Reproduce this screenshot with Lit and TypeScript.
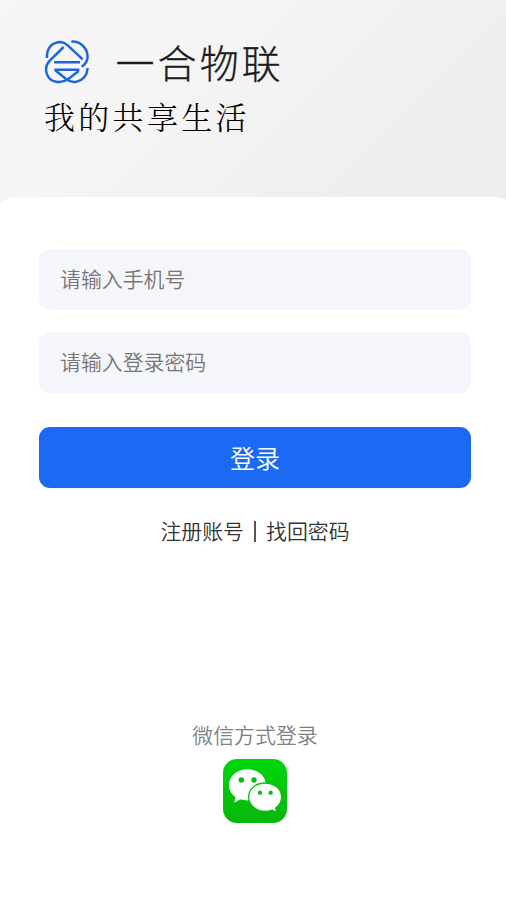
import { LitElement, html, css } from "lit";
import { customElement } from "lit/decorators.js";

@customElement("brand-mark")
class BrandMark extends LitElement {
  static styles = css`
    :host { display: block; width: 46px; height: 46px; }
    svg { display: block; width: 100%; height: 100%; }
  `;
  render() {
    return html`<svg viewBox="0 0 138 138" fill="none" stroke="#1b66dc" stroke-width="7.5">
      <path d="M9 54C7 23 26 6 50 6Q62 7 72 17L116 58" />
      <path d="M59 21L18 61C-4 84 7 120 36 125Q56 129 72 118L104 93" />
      <path d="M82 5C111 3 134 28 130 56Q127 71 113 80" />
      <path d="M30 67H108M31 89H106M34 91L67 118Q80 128 97 125C117 121 129 107 131 84" />
    </svg>`;
  }
}

@customElement("wechat-icon")
class WechatIcon extends LitElement {
  static styles = css`
    :host { display: block; width: 64px; height: 64px; border-radius: 14px; overflow: hidden;
      background: linear-gradient(#00d60c, #08b60c); }
    svg { display: block; width: 100%; height: 100%; }
  `;
  render() {
    return html`<svg viewBox="0 0 192 192">
      <path fill="#fff" d="M73 31C41 31 18 52 18 79C18 94 26 106 38 115L34 131L52 121C60 123 69 125 79 124C112 123 130 103 129 78C128 51 105 31 73 31Z" />
      <path fill="#fff" stroke="#05c30e" stroke-width="4" d="M126 72C98 72 77 90 77 114C77 138 100 157 127 157Q138 157 147 153L161 161L158 147C169 139 176 128 176 114C176 90 154 72 126 72Z" />
      <g fill="#07bd10"><circle cx="55" cy="63" r="8"/><circle cx="93" cy="63" r="8"/><circle cx="111" cy="101" r="6.5"/><circle cx="143" cy="101" r="6.5"/></g>
    </svg>`;
  }
}

@customElement("app-root")
class AppRoot extends LitElement {
  static styles = css`
    :host { display: block; height: 900px; overflow: hidden; box-sizing: border-box;
      font-family: "Noto Sans CJK SC", sans-serif; font-weight: 350;
      background: linear-gradient(135deg, #f6f6f6 0, #f5f5f5 170px, #eeeeee 400px, #eeeeee 100%); }
    * { box-sizing: border-box; }
    header { height: 196.6px; padding: 39px 44px 0; }
    .brand { display: flex; height: 46px; align-items: center; }
    .brand brand-mark { flex: none; margin-top: 2px; }
    h1 { margin: -2px 0 0 25.5px; font-size: 39px; line-height: 46px; letter-spacing: 3.1px; font-weight: 300; color: #1c1c1c; white-space: nowrap; -webkit-text-stroke: 0.3px #1c1c1c; }
    .tagline { margin: 8px 0 0; font-family: "Noto Serif CJK SC", "Noto Sans CJK SC", serif; font-size: 31px; line-height: 46px; letter-spacing: 3.3px; font-weight: 300; color: #000; white-space: nowrap; }
    main { height: 704px; margin: 0 -11px 0 -5px; padding: 52px 46px 0 44px; background: #fff; border-radius: 22px 22px 0 0; display: flex; flex-direction: column; }
    input, button { display: block; width: 100%; height: 61px; border: 0; border-radius: 11px; font-family: inherit; font-weight: inherit; flex: none; outline: 0; }
    input { background: #f5f6fb; padding: 0 21px 3px; font-size: 20.9px; margin-bottom: 22.6px; }
    input::placeholder { color: #757575; opacity: 1; }
    button { margin-top: 11.4px; background: #1c6af3; color: #fff; font-size: 25px; padding: 0 0 2px; }
    .links { display: flex; justify-content: center; align-items: center; margin-top: 27px; height: 30px; font-size: 20.9px; color: #333; }
    .bar { width: 2px; height: 21px; margin: 2px 10px 0 10px; background: #555; }
    .social { margin-top: 174px; display: flex; flex-direction: column; align-items: center; font-size: 20.9px; line-height: 30px; color: #808080; gap: 9.4px; }
  `;
  render() {
    return html`<header>
        <div class="brand"><brand-mark></brand-mark><h1>一合物联</h1></div>
        <p class="tagline">我的共享生活</p>
      </header>
      <main>
        <input type="tel" placeholder="请输入手机号" />
        <input type="password" placeholder="请输入登录密码" />
        <button>登录</button>
        <nav class="links"><span>注册账号</span><i class="bar"></i><span>找回密码</span></nav>
        <section class="social"><span>微信方式登录</span><wechat-icon></wechat-icon></section>
      </main>`;
  }
}
